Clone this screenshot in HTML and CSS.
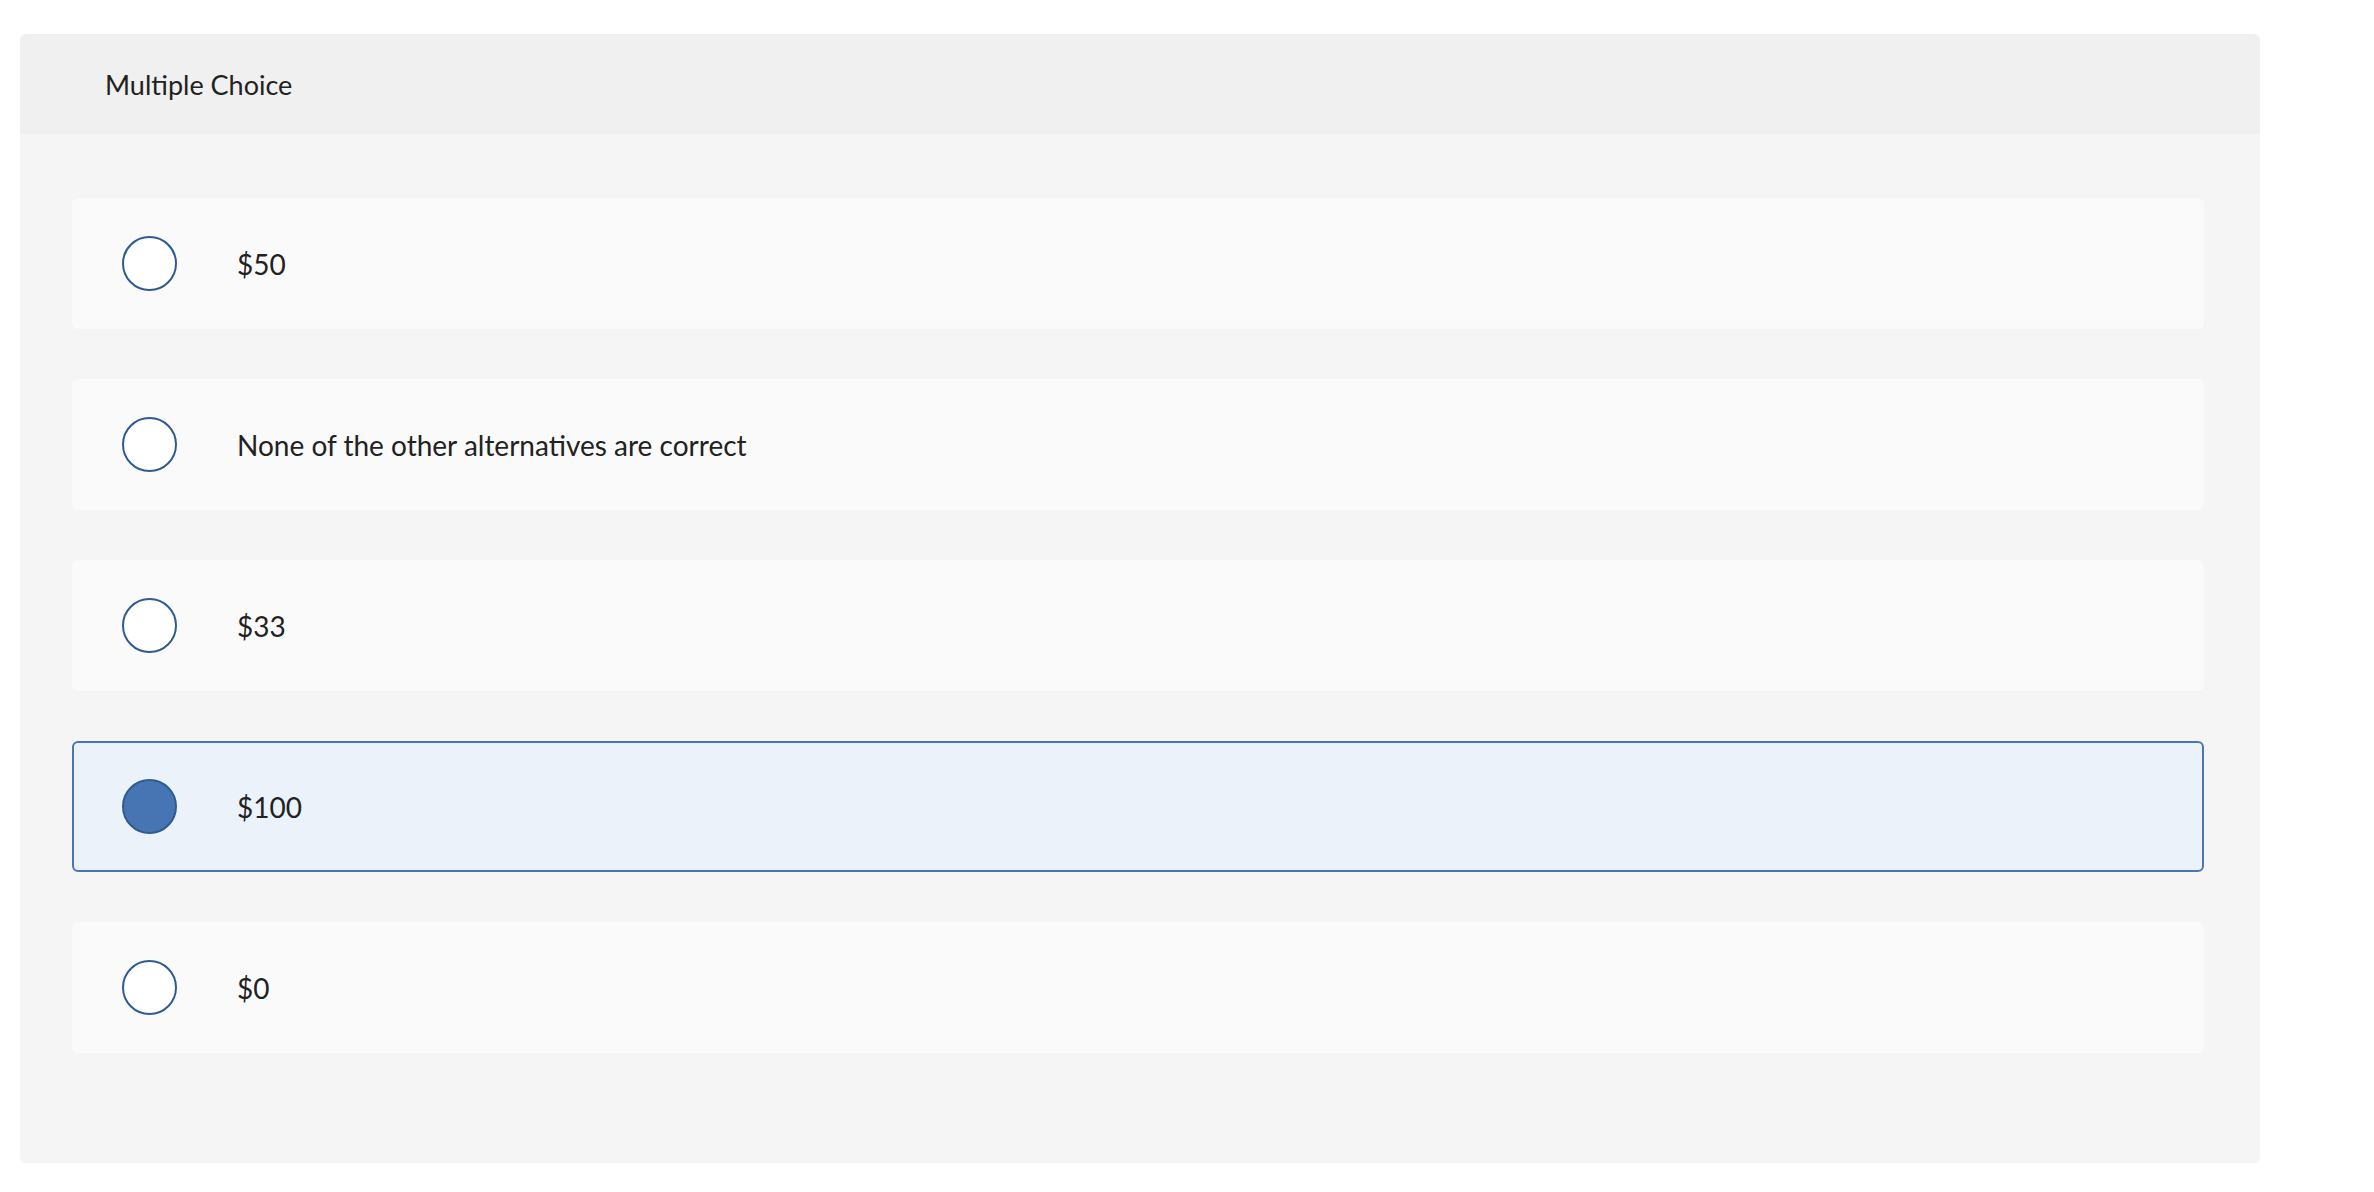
FILE: index.html
```html
<!DOCTYPE html>
<html lang="en">
<head>
<meta charset="utf-8">
<title>Multiple Choice</title>
<link rel="stylesheet" href="styles.css">
</head>
<body>
<section class="panel">
  <header class="panel-header">Multiple Choice</header>
  <div class="panel-body">
    <div class="option"><span class="radio"></span><span class="label">$50</span></div>
    <div class="option"><span class="radio"></span><span class="label">None of the other alternatives are correct</span></div>
    <div class="option"><span class="radio"></span><span class="label">$33</span></div>
    <div class="option selected"><span class="radio"></span><span class="label">$100</span></div>
    <div class="option"><span class="radio"></span><span class="label">$0</span></div>
  </div>
</section>
</body>
</html>
```
FILE: styles.css
```css
html, body {
  margin: 0;
  padding: 0;
  background: #ffffff;
}
body {
  padding: 34px 0 0 20px;
  font-family: "Lato", "Noto Sans", sans-serif;
  color: #222222;
}
.panel {
  width: 2240px;
  height: 1129px;
  background: #f5f5f5;
  border-radius: 6px;
  overflow: hidden;
  display: flex;
  flex-direction: column;
}
.panel-header {
  height: 100px;
  background: #f0f0f0;
  display: flex;
  align-items: center;
  padding-left: 85px;
  font-size: 27px;
}
.panel-body {
  padding: 64px 56px 0 52px;
  display: flex;
  flex-direction: column;
  gap: 50px;
}
.option {
  height: 131px;
  box-sizing: border-box;
  background: #fafafa;
  border-radius: 6px;
  display: flex;
  align-items: center;
  padding-left: 50px;
  border: 2px solid transparent;
}
.option .radio {
  width: 55px;
  height: 55px;
  box-sizing: border-box;
  border-radius: 50%;
  border: 2px solid #2f5b93;
  background: #ffffff;
  margin-left: -2px;
  flex: none;
}
.option .label {
  margin-left: 60px;
  font-size: 28px;
}
.option.selected {
  background: #ecf2fa;
  border-color: #4a76b6;
}
.option.selected .radio {
  background: #4775b3;
  border-color: #2f5b93;
}
```
